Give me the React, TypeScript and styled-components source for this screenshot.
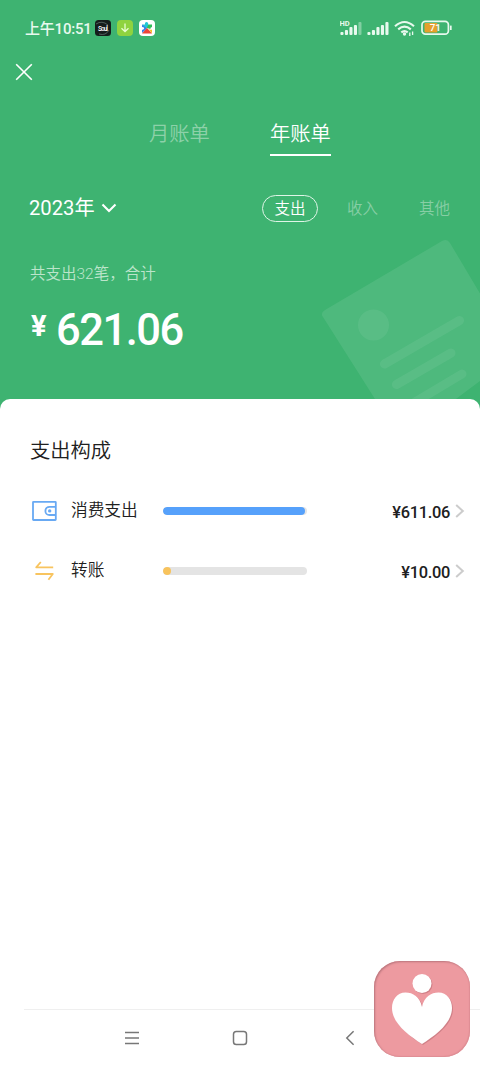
import React from "react";
import styled, { createGlobalStyle } from "styled-components";

const GlobalStyle = createGlobalStyle`
  * { box-sizing: border-box; }
  body {
    margin: 0;
    font-family: Roboto, "Noto Sans CJK SC", sans-serif;
  }
`;

const Page = styled.main`
  width: 480px;
  height: 1067px;
  display: flex;
  flex-direction: column;
  position: relative;
  overflow: hidden;
  background: #3eb371;
`;

const Header = styled.header`
  height: 399px;
  flex: none;
  color: #fff;
`;

const StatusBar = styled.div`
  height: 56px;
  padding: 0 27px 0 25px;
  display: flex;
  align-items: center;
  justify-content: space-between;
`;

const StatusGroup = styled.div<{ $gap: number }>`
  display: flex;
  align-items: center;
  gap: ${(p) => p.$gap}px;
`;

const Clock = styled.span`
  font-size: 15px;
  line-height: 20px;
  font-weight: 500;
  width: 66px;
  padding-top: 1px;
  margin-right: -2px;
  letter-spacing: -0.2px;
  white-space: nowrap;
  color: #e8f9ee;
`;

const CloseRow = styled.div`
  height: 32px;
  padding-left: 15px;
  display: flex;
  align-items: center;
`;

const Tabs = styled.nav`
  display: flex;
  justify-content: center;
  gap: 60px;
  padding-top: 28px;
  height: 70px;
`;

const Tab = styled.div<{ $active?: boolean }>`
  width: 61px;
  height: 40px;
  font-size: 20.3px;
  line-height: 36px;
  font-weight: 350;
  white-space: nowrap;
  color: ${(p) => (p.$active ? "#fff" : "#8dd1a9")};
  border-bottom: 2px solid ${(p) => (p.$active ? "#fff" : "transparent")};
`;

const FilterRow = styled.div`
  margin-top: 36px;
  height: 28px;
  padding: 0 30px 0 29px;
  display: flex;
  align-items: center;
  justify-content: space-between;
`;

const YearPicker = styled.div`
  display: flex;
  align-items: center;
  gap: 6px;
  font-size: 20.2px;
  line-height: 28px;
`;

const Filters = styled.div`
  display: flex;
  align-items: center;
`;

const Filter = styled.div<{ $active?: boolean }>`
  font-size: 15.5px;
  line-height: 26px;
  padding-top: ${(p) => (p.$active ? 0 : 1)}px;
  font-weight: 350;
  color: ${(p) => (p.$active ? "#fff" : "#87cea5")};
  margin-left: ${(p) => (p.$active ? 0 : 41)}px;
  white-space: nowrap;
  ${(p) =>
    p.$active &&
    `border: 1px solid #dff5e7; border-radius: 14px; width: 56px; height: 27px; text-align: center; margin-right: -12px;`}
`;

const Caption = styled.p`
  margin: 41px 0 0 30px;
  font-size: 15.5px;
  line-height: 22px;
  font-weight: 350;
  color: #bce5cb;
`;

const Total = styled.div`
  margin: 19px 0 0 31px;
  height: 54px;
  display: flex;
  align-items: flex-start;
`;

const Currency = styled.span`
  width: 25px;
  font-size: 29px;
  line-height: 45px;
  font-weight: 700;
`;

const Figure = styled.span`
  font-size: 43.5px;
  line-height: 54px;
  font-weight: 500;
  letter-spacing: -1.5px;
  white-space: nowrap;
`;

const Watermark = styled.svg`
  position: absolute;
  left: 301px;
  top: 220px;
`;

const Sheet = styled.section`
  position: relative;
  flex: 1;
  display: flex;
  flex-direction: column;
  background: #fff;
  border-radius: 10px 10px 0 0;
`;

const Title = styled.h2`
  margin: 37px 0 15px 30px;
  font-size: 20.3px;
  line-height: 30px;
  font-weight: 350;
  color: #202020;
`;

const Row = styled.div`
  height: 60px;
  padding: 0 15px 0 31px;
  display: flex;
  align-items: center;
`;

const RowIcon = styled.div`
  width: 40px;
  display: flex;
`;

const Label = styled.span`
  width: 92px;
  font-size: 16.7px;
  line-height: 24px;
  font-weight: 350;
  color: #202020;
`;

const Track = styled.div`
  width: 144px;
  height: 8px;
  border-radius: 4px;
  background: #e4e4e4;
  overflow: hidden;
`;

const Fill = styled.div<{ $color: string }>`
  height: 100%;
  border-radius: 4px;
  background: ${(p) => p.$color};
`;

const Amount = styled.span`
  flex: 1;
  text-align: right;
  margin-right: 4px;
  padding-top: 3px;
  font-size: 16.4px;
  line-height: 22px;
  font-weight: 500;
  color: #202020;
  letter-spacing: -0.3px;
`;

const BottomNav = styled.footer`
  margin: auto 0 0 24px;
  height: 58px;
  border-top: 1px solid #efefef;
  padding: 0 0 2px 100px;
  display: flex;
  align-items: center;
`;

const NavButton = styled.div<{ $width: number }>`
  display: flex;
  width: ${(p) => p.$width}px;
`;

const FloatingApp = styled.div`
  position: absolute;
  left: 374px;
  top: 961px;
  width: 96px;
  height: 96px;
  border-radius: 26px;
  background: #ed9aa0;
  box-shadow: inset 1px 1px 2px #b9757c, inset -1px -1px 1px #e08f96;
`;

const BARS = [3, 5, 8, 10, 13];

const Signal = ({ dim }: { dim?: boolean }) => (
  <svg width="22" height="16" viewBox="0 0 22 16" fill="#e8f9ee">
    {BARS.map((h, i) => (
      <rect
        key={h}
        x={i * 4.5 + 0.4}
        y={15 - h}
        width="3.1"
        height={h}
        rx="1"
        opacity={dim && i === 4 ? 0.4 : 1}
      />
    ))}
    {dim && (
      <text x="-0.5" y="6" fontSize="7.5" fontWeight="700" fontFamily="Roboto, sans-serif">
        HD
      </text>
    )}
  </svg>
);

const Chevron = () => (
  <svg width="11" height="16" viewBox="0 0 11 16" fill="none" stroke="#cccccc" strokeWidth="2">
    <path d="M2.2 2 L8.8 8 L2.2 14" />
  </svg>
);

const WalletIcon = () => (
  <svg width="27" height="22" viewBox="0 0 27 22" fill="none" stroke="#68a9f3" strokeWidth="1.8">
    <rect x="2" y="1.8" width="22.8" height="18.2" rx="0.5" />
    <path d="M24.8 6.8 H18.5 a4.1 4.1 0 0 0 0 8.2 H24.8" />
    <circle cx="18.7" cy="10.9" r="1.7" fill="#68a9f3" stroke="none" />
  </svg>
);

const TransferIcon = () => (
  <svg width="27" height="22" viewBox="0 0 27 22" fill="none" stroke="#f8c45f" strokeWidth="1.8" strokeLinejoin="round">
    <path d="M9.8 2 L5.2 7.4 H22.2 M4.4 14 H21.8 L17.4 19.8" />
  </svg>
);

const rows = [
  { name: "消费支出", amount: "¥611.06", width: 142, color: "#56a1fb", icon: <WalletIcon /> },
  { name: "转账", amount: "¥10.00", width: 8, color: "#f8c35c", icon: <TransferIcon /> },
];

export default function App() {
  return (
    <Page>
      <GlobalStyle />
      <Watermark width="180" height="190" viewBox="0 0 180 190">
        <path
          d="M24 90 L141 21 Q146 18 149 23 L215 134 L100 220 L22 97 Q19 93 24 90Z"
          fill="#fff"
          fillOpacity="0.085"
        />
        <circle cx="72.5" cy="105" r="15.5" fill="#fff" fillOpacity="0.065" />
        <g stroke="#fff" strokeOpacity="0.065" strokeWidth="9" strokeLinecap="round">
          <path d="M83.5 144 L158.5 100.5 M95.5 164.5 L150 133 M104 188 L161 154" />
        </g>
      </Watermark>
      <Header>
        <StatusBar>
          <StatusGroup $gap={6}>
            <Clock>上午10:51</Clock>
            <svg width="16" height="16" viewBox="0 0 16 16">
              <rect width="16" height="16" rx="3.5" fill="#151d1b" />
              <path d="M1 4 Q7 0 13 5 M4 14 Q11 16 14 10" stroke="#50605b" fill="none" />
              <text x="3" y="10.5" fontSize="6.5" fontWeight="500" fill="#fff" textLength="10" fontFamily="Roboto, sans-serif">
                Soul
              </text>
            </svg>
            <svg width="16" height="16" viewBox="0 0 16 16">
              <rect width="16" height="16" rx="4" fill="#8fd33f" />
              <path d="M8 3.5 V11.5 M4.5 8.3 L8 11.7 L11.5 8.3" stroke="#eaffd2" strokeWidth="1.3" fill="none" />
            </svg>
            <svg width="16" height="16" viewBox="0 0 16 16">
              <rect width="16" height="16" rx="4" fill="#fff" />
              <path d="M3 4.5 H6 Q5.5 2 7.7 2 Q9.5 2 9.3 4.5 L9 8 H5.5Z" fill="#22c5d5" />
              <path d="M9.2 4.5 H13 V7 Q11 7.5 11.4 9 L8 8Z" fill="#30bd58" />
              <path d="M3 4.5 L8 8.5 L3 13 V10 Q5.3 9.5 5.2 8.3 Q5 7 3 7Z" fill="#397eea" />
              <path d="M8 8 L13 13.5 H3Z" fill="#ed4437" />
              <path d="M9 8.5 Q11 10.5 13 9.5 V13.5Z" fill="#f7bd27" />
            </svg>
          </StatusGroup>
          <StatusGroup $gap={5}>
            <Signal dim />
            <Signal />
            <svg width="22" height="17" viewBox="0 0 22 17" fill="none" stroke="#e8f9ee" strokeWidth="2.1">
              <path d="M1 6.2 Q10.5 -2.2 20 6.2 M4.2 9.4 Q10.5 3.8 16.8 9.4 M7.3 12.4 Q10.5 9.8 13.7 12.4" />
              <circle cx="10.5" cy="14" r="1.7" fill="#e8f9ee" stroke="none" />
              <path d="M15.8 12.5 V16 M18.6 11.5 V15" strokeWidth="1.3" />
            </svg>
            <svg width="32" height="16" viewBox="0 0 32 16">
              <rect x="3.5" y="3" width="13" height="9.5" rx="1" fill="#e5a02c" />
              <rect x="1" y="1.4" width="26.4" height="12.8" rx="3.4" fill="none" stroke="#e8f9ee" strokeWidth="1.7" />
              <path d="M29.8 5.6 V10" stroke="#e8f9ee" strokeWidth="1.7" />
              <text x="14.2" y="11.3" fontSize="9.8" fontWeight="500" fill="#fff" textAnchor="middle" fontFamily="Roboto, sans-serif">
                71
              </text>
            </svg>
          </StatusGroup>
        </StatusBar>
        <CloseRow>
          <svg width="18" height="18" viewBox="0 0 18 18" stroke="#fff" strokeWidth="1.6">
            <path d="M1.2 1.2 L16.8 16.8 M16.8 1.2 L1.2 16.8" />
          </svg>
        </CloseRow>
        <Tabs>
          <Tab>月账单</Tab>
          <Tab $active>年账单</Tab>
        </Tabs>
        <FilterRow>
          <YearPicker>
            <span>2023年</span>
            <svg width="16" height="12" viewBox="0 0 16 12" fill="none" stroke="#fff" strokeWidth="2.1">
              <path d="M1.5 2.5 L8 9 L14.5 2.5" />
            </svg>
          </YearPicker>
          <Filters>
            <Filter $active>支出</Filter>
            <Filter>收入</Filter>
            <Filter>其他</Filter>
          </Filters>
        </FilterRow>
        <Caption>共支出32笔，合计</Caption>
        <Total>
          <Currency>¥</Currency>
          <Figure>621.06</Figure>
        </Total>
      </Header>
      <Sheet>
        <Title>支出构成</Title>
        <div>
          {rows.map((row) => (
            <Row key={row.name}>
              <RowIcon>{row.icon}</RowIcon>
              <Label>{row.name}</Label>
              <Track>
                <Fill $color={row.color} style={{ width: row.width }} />
              </Track>
              <Amount>{row.amount}</Amount>
              <Chevron />
            </Row>
          ))}
        </div>
        <BottomNav>
          <NavButton $width={108}>
            <svg width="16" height="16" viewBox="0 0 16 16" stroke="#777" strokeWidth="1.5">
              <path d="M1 2.5 H15 M1 8 H15 M1 13.5 H15" />
            </svg>
          </NavButton>
          <NavButton $width={113}>
            <svg width="16" height="16" viewBox="0 0 16 16" fill="none" stroke="#777" strokeWidth="1.5">
              <rect x="1.5" y="1.5" width="13" height="13" rx="2.8" />
            </svg>
          </NavButton>
          <NavButton $width={10}>
            <svg width="10" height="16" viewBox="0 0 10 16" fill="none" stroke="#777" strokeWidth="1.5">
              <path d="M8.6 1.2 L1.8 8 L8.6 14.8" />
            </svg>
          </NavButton>
        </BottomNav>
      </Sheet>
      <FloatingApp>
        <svg width="96" height="96" viewBox="0 0 96 96">
          <g fill="#bd6f77" opacity="0.6" transform="translate(1 1)">
            <circle cx="48" cy="22.5" r="9.5" />
            <path d="M48 46 C46 36 39 31.5 31.5 31.5 C23 31.5 18 39 18 47 C18 62 34 74 48 83 C62 74 78 62 78 47 C78 39 73 31.5 64.5 31.5 C57 31.5 50 36 48 46Z" />
          </g>
          <g fill="#fff">
            <circle cx="48" cy="22.5" r="9.5" />
            <path d="M48 46 C46 36 39 31.5 31.5 31.5 C23 31.5 18 39 18 47 C18 62 34 74 48 83 C62 74 78 62 78 47 C78 39 73 31.5 64.5 31.5 C57 31.5 50 36 48 46Z" />
          </g>
        </svg>
      </FloatingApp>
    </Page>
  );
}
